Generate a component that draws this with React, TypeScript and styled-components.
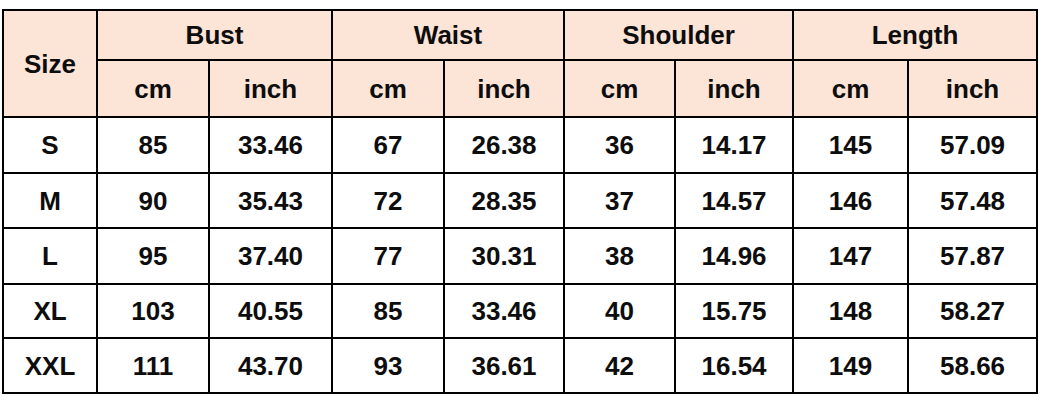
import styled, { createGlobalStyle } from "styled-components";

const GlobalStyle = createGlobalStyle`
  html, body {
    margin: 0;
    padding: 0;
    background: #ffffff;
  }
  body {
    font-family: "Liberation Sans", Arial, sans-serif;
  }
`;

type Row = {
  size: string;
  values: string[];
};

const groups = ["Bust", "Waist", "Shoulder", "Length"];
const colWidths = [94, 112, 123, 112, 120, 111, 118, 115, 129];
const dataHeights = [56, 55, 56, 54, 55];

const rows: Row[] = [
  { size: "S", values: ["85", "33.46", "67", "26.38", "36", "14.17", "145", "57.09"] },
  { size: "M", values: ["90", "35.43", "72", "28.35", "37", "14.57", "146", "57.48"] },
  { size: "L", values: ["95", "37.40", "77", "30.31", "38", "14.96", "147", "57.87"] },
  { size: "XL", values: ["103", "40.55", "85", "33.46", "40", "15.75", "148", "58.27"] },
  { size: "XXL", values: ["111", "43.70", "93", "36.61", "42", "16.54", "149", "58.66"] },
];

export default function App() {
  return (
    <>
      <GlobalStyle />
      <Page>
        <SizeTable>
          <colgroup>
            {colWidths.map((w, i) => (
              <col key={i} style={{ width: w }} />
            ))}
          </colgroup>
          <thead>
            <HeadRow $height={50}>
              <HeadCell rowSpan={2}>Size</HeadCell>
              {groups.map((g) => (
                <HeadCell key={g} colSpan={2}>
                  {g}
                </HeadCell>
              ))}
            </HeadRow>
            <HeadRow $height={57}>
              {groups.map((g) => [
                <HeadCell key={g + "cm"}>cm</HeadCell>,
                <HeadCell key={g + "in"}>inch</HeadCell>,
              ])}
            </HeadRow>
          </thead>
          <tbody>
            {rows.map((row, i) => (
              <BodyRow key={row.size} $height={dataHeights[i]}>
                <Cell>{row.size}</Cell>
                {row.values.map((v, j) => (
                  <Cell key={j}>{v}</Cell>
                ))}
              </BodyRow>
            ))}
          </tbody>
        </SizeTable>
      </Page>
    </>
  );
}

const Page = styled.div`
  padding: 9px 0 0 2px;
`;

const SizeTable = styled.table`
  table-layout: fixed;
  width: 1034px;
  border-collapse: collapse;
  border: 2px solid #000;
`;

const HeadRow = styled.tr<{ $height: number }>`
  height: ${({ $height }) => $height}px;
  background: #fce4d6;
`;

const BodyRow = styled.tr<{ $height: number }>`
  height: ${({ $height }) => $height}px;
  background: #ffffff;
`;

const HeadCell = styled.th`
  border: 2px solid #000;
  padding: 0;
  text-align: center;
  vertical-align: middle;
  font-size: 26px;
  line-height: 1;
  font-weight: 700;
  color: #0d0d0d;
`;

const Cell = styled.td`
  border: 2px solid #000;
  padding: 0;
  text-align: center;
  vertical-align: middle;
  font-size: 26px;
  line-height: 1;
  font-weight: 700;
  color: #0d0d0d;
`;
